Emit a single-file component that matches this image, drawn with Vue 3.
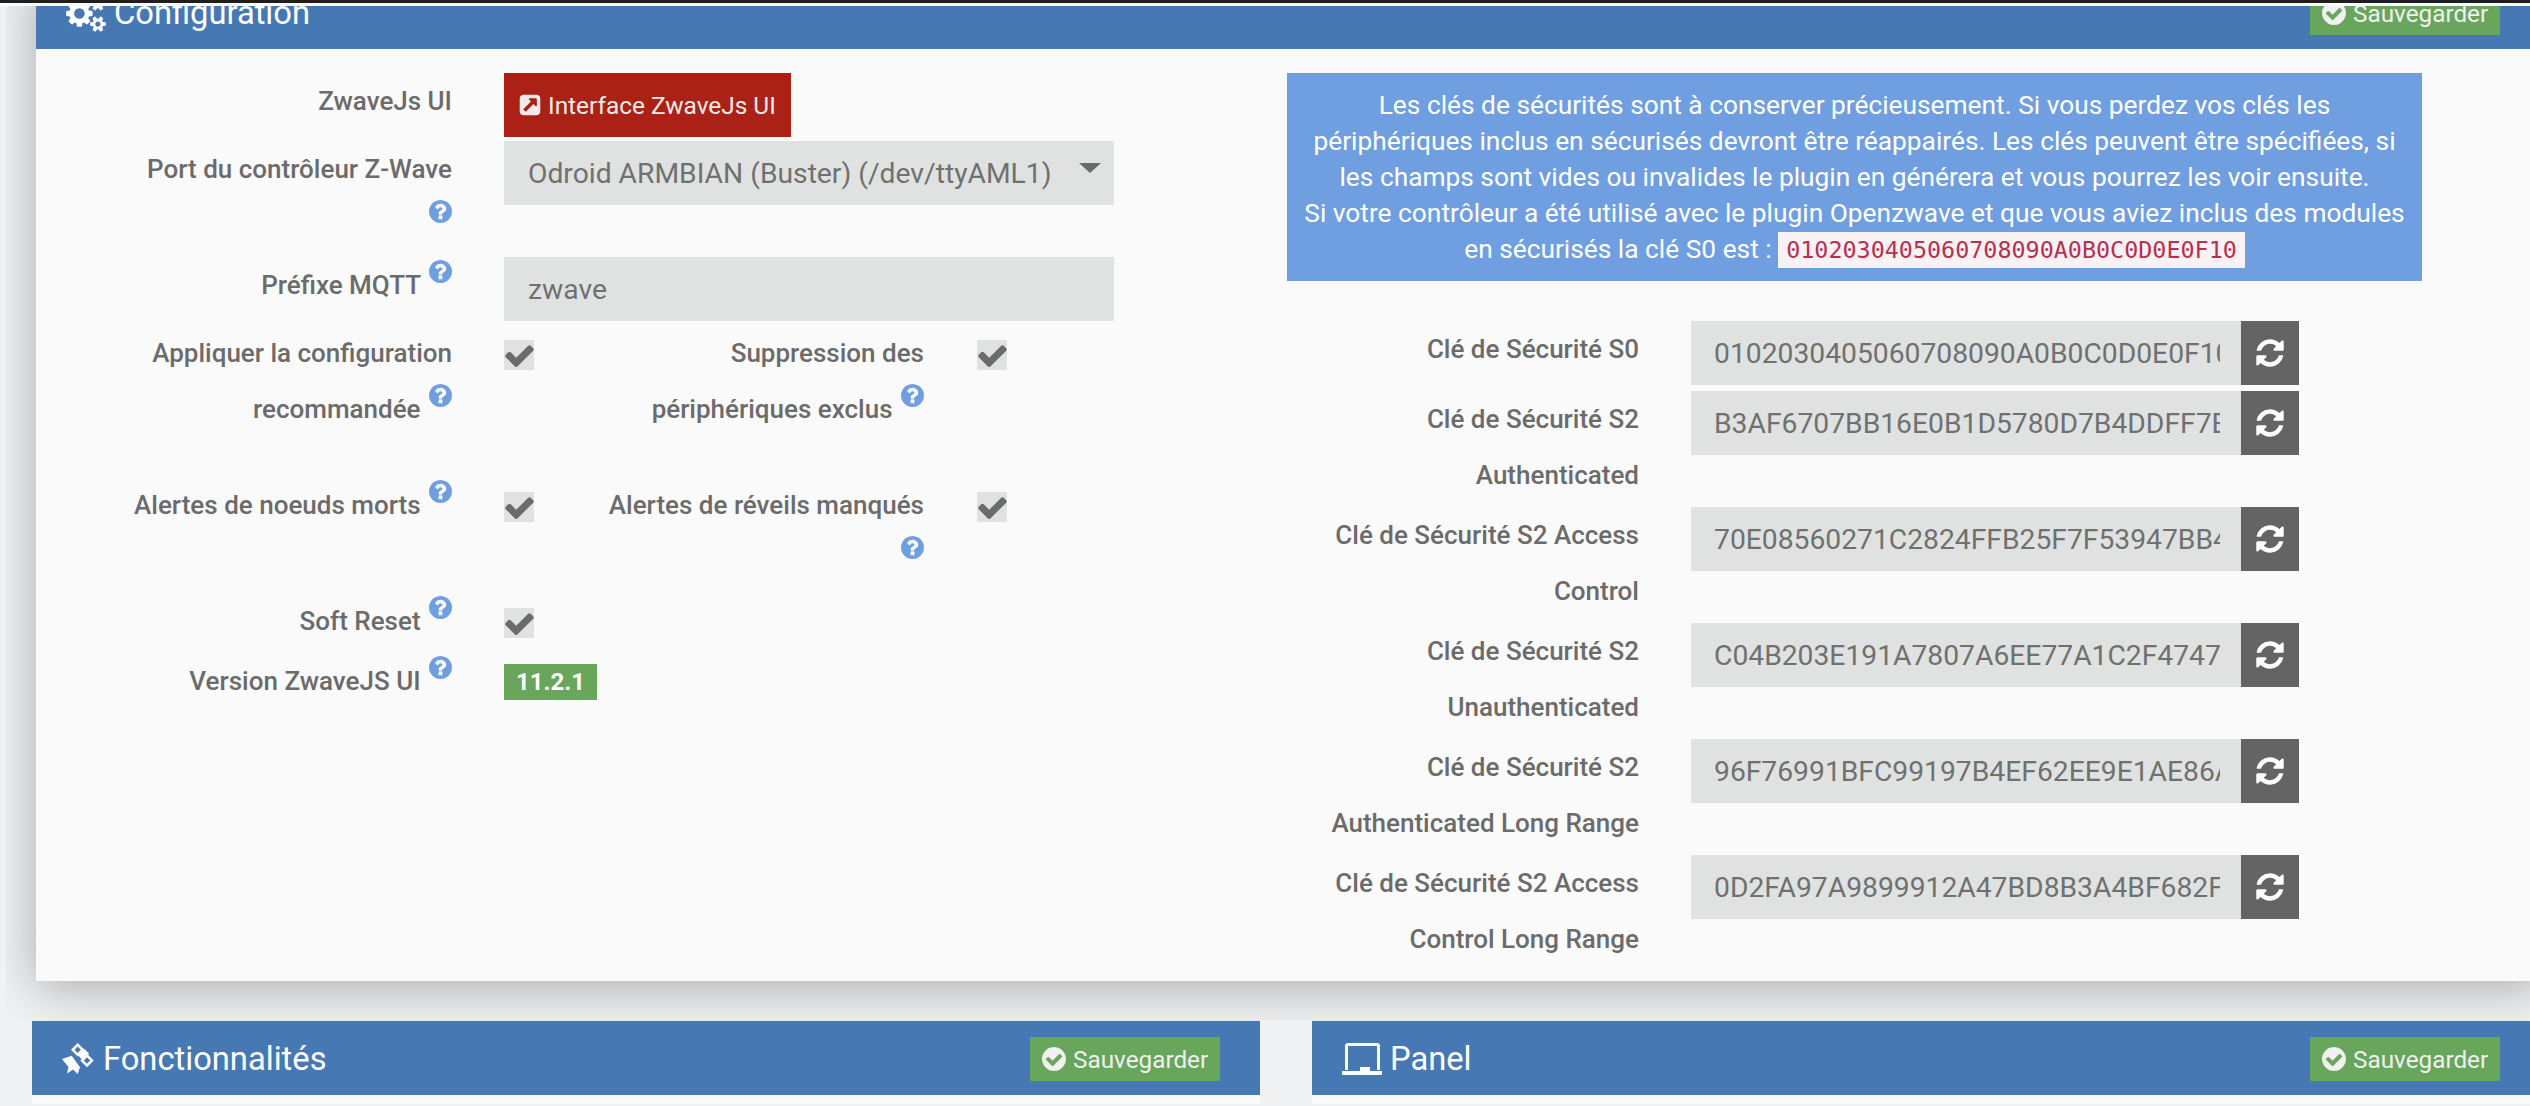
<script setup>
import { ref } from 'vue'

const CHECK = 'M1671 566q0 40-28 68l-724 724-136 136q-28 28-68 28t-68-28l-136-136-362-362q-28-28-28-68t28-68l136-136q28-28 68-28t68 28l294 295 656-657q28-28 68-28t68 28l136 136q28 28 28 68z'
const HELP = 'M1024 1376v-192q0-14-9-23t-23-9h-192q-14 0-23 9t-9 23v192q0 14 9 23t23 9h192q14 0 23-9t9-23zm256-672q0-88-55.5-163t-138.5-116-170-41q-243 0-371 213-15 24 8 42l132 100q7 6 19 6 16 0 25-12 53-68 86-92 34-24 86-24 48 0 85.5 26t37.5 59q0 38-20 61t-68 45q-63 28-115.5 86.5t-52.5 125.5v36q0 14 9 23t23 9h192q14 0 23-9t9-23q0-19 21.5-49.5t54.5-49.5q32-18 49-28.5t46-35 44.5-48 28-60.5 12.5-81zm384 192q0 209-103 385.5t-279.5 279.5-385.5 103-385.5-103-279.5-279.5-103-385.5 103-385.5 279.5-279.5 385.5-103 385.5 103 279.5 279.5 103 385.5z'
const SAVE = 'M1412 734q0-28-18-46l-91-90q-19-19-45-19t-45 19l-408 407-226-226q-19-19-45-19t-45 19l-91 90q-18 18-18 46 0 27 18 45l362 362q19 19 45 19 27 0 46-19l543-543q18-18 18-45zm252 162q0 209-103 385.5t-279.5 279.5-385.5 103-385.5-103-279.5-279.5-103-385.5 103-385.5 279.5-279.5 385.5-103 385.5 103 279.5 279.5 103 385.5z'
const REFRESH = 'M1639 1056q0 5-1 7-64 268-268 434.5t-478 166.5q-146 0-282.5-55t-243.5-157l-129 129q-19 19-45 19t-45-19-19-45v-448q0-26 19-45t45-19h448q26 0 45 19t19 45-19 45l-137 137q71 66 161 102t187 36q134 0 250-65t186-179q11-17 53-117 8-23 30-23h192q13 0 22.5 9.5t9.5 22.5zm25-800v448q0 26-19 45t-45 19h-448q-26 0-45-19t-19-45 19-45l138-138q-148-137-349-137-134 0-250 65t-186 179q-11 17-53 117-8 23-30 23h-199q-13 0-22.5-9.5t-9.5-22.5v-7q65-268 270-434.5t480-166.5q146 0 284 55.5t245 156.5l130-129q19-19 45-19t45 19 19 45z'
const LINK = 'M1408 928v-480q0-26-19-45t-45-19h-480q-42 0-59 39-17 41 14 70l144 144-534 534q-19 19-19 45t19 45l102 102q19 19 45 19t45-19l534-534 144 144q18 19 45 19 12 0 25-5 39-17 39-59zm256-512v960q0 119-84.5 203.5t-203.5 84.5h-960q-119 0-203.5-84.5t-84.5-203.5v-960q0-119 84.5-203.5t203.5-84.5h960q119 0 203.5 84.5t84.5 203.5z'
const COGS = 'M896 896q0-106-75-181t-181-75-181 75-75 181 75 181 181 75 181-75 75-181zm768 512q0-52-38-90t-90-38-90 38-38 90q0 53 37.5 90.5t90.5 37.5 90.5-37.5 37.5-90.5zm0-1024q0-52-38-90t-90-38-90 38-38 90q0 53 37.5 90.5t90.5 37.5 90.5-37.5 37.5-90.5zm-384 421v185q0 10-7 19.5t-16 10.5l-155 24q-11 35-32 76 34 48 90 115 7 11 7 20 0 12-7 19-23 30-82.5 89.5t-78.5 59.5q-11 0-21-7l-115-90q-37 19-77 31-11 108-23 155-7 24-30 24h-186q-11 0-20-7.5t-10-17.5l-23-153q-34-10-75-31l-118 89q-7 7-20 7-11 0-21-8-144-133-144-160 0-9 7-19 10-14 41-53t47-61q-23-44-35-82l-152-24q-10-1-17-9.5t-7-19.5v-185q0-10 7-19.5t16-10.5l155-24q11-35 32-76-34-48-90-115-7-11-7-20 0-12 7-20 22-30 82-89t79-59q11 0 21 7l115 90q34-18 77-32 11-108 23-154 7-24 30-24h186q11 0 20 7.5t10 17.5l23 153q34 10 75 31l118-89q8-7 20-7 11 0 21 8 144 133 144 160 0 8-7 19-12 16-42 54t-45 60q23 48 34 82l152 23q10 2 17 10.5t7 19.5zm640 533v140q0 16-149 31-12 27-30 52 51 113 51 138 0 4-4 7-122 71-124 71-8 0-46-47t-52-68q-20 2-30 2t-30-2q-14 21-52 68t-46 47q-2 0-124-71-4-3-4-7 0-25 51-138-18-25-30-52-149-15-149-31v-140q0-16 149-31 13-29 30-52-51-113-51-138 0-4 4-7 4-2 35-20t59-34 30-16q8 0 46 46.5t52 67.5q20-2 30-2t30 2q51-71 92-112l6-2q4 0 124 70 4 3 4 7 0 25-51 138 17 23 30 52 149 15 149 31zm0-1024v140q0 16-149 31-12 27-30 52 51 113 51 138 0 4-4 7-122 71-124 71-8 0-46-47t-52-68q-20 2-30 2t-30-2q-14 21-52 68t-46 47q-2 0-124-71-4-3-4-7 0-25 51-138-18-25-30-52-149-15-149-31v-140q0-16 149-31 13-29 30-52-51-113-51-138 0-4 4-7 4-2 35-20t59-34 30-16q8 0 46 46.5t52 67.5q20-2 30-2t30 2q51-71 92-112l6-2q4 0 124 70 4 3 4 7 0 25-51 138 17 23 30 52 149 15 149 31z'

const prefix = ref('zwave')

const keys = ref([
  { label: 'Clé de Sécurité S0', value: '0102030405060708090A0B0C0D0E0F10' },
  { label: 'Clé de Sécurité S2 Authenticated', value: 'B3AF6707BB16E0B1D5780D7B4DDFF7B4' },
  { label: 'Clé de Sécurité S2 Access Control', value: '70E08560271C2824FFB25F7F53947BB4' },
  { label: 'Clé de Sécurité S2 Unauthenticated', value: 'C04B203E191A7807A6EE77A1C2F47470' },
  { label: 'Clé de Sécurité S2 Authenticated Long Range', value: '96F76991BFC99197B4EF62EE9E1AE86A' },
  { label: 'Clé de Sécurité S2 Access Control Long Range', value: '0D2FA97A9899912A47BD8B3A4BF682F1' }
])
</script>

<template>
  <div class="page">
    <div class="topbar"></div>
    <div class="scroll">
      <div class="card-clip">
        <section class="card">
          <header class="panel-head">
            <h3 class="title">
              <svg class="ic-cogs" viewBox="0 0 1920 1792"><path :d="COGS" /></svg>
              Configuration
            </h3>
            <button class="save">
              <svg class="ic-save" viewBox="0 0 1792 1792"><path :d="SAVE" /></svg>
              Sauvegarder
            </button>
          </header>

          <div class="card-body">
            <div class="col-left">
              <div class="row">
                <div class="label">ZwaveJs UI</div>
                <a class="ext-btn">
                  <svg class="ic-link" viewBox="0 0 1792 1792"><path :d="LINK" /></svg>
                  Interface ZwaveJs UI
                </a>
              </div>

              <div class="row">
                <div class="label">Port du contrôleur Z-Wave <svg class="help" viewBox="128 128 1536 1536"><path :d="HELP" /></svg></div>
                <div class="select-wrap">
                  <select class="control select">
                    <option>Odroid ARMBIAN (Buster) (/dev/ttyAML1)</option>
                  </select>
                </div>
              </div>

              <div class="row">
                <div class="label">Préfixe MQTT <svg class="help" viewBox="128 128 1536 1536"><path :d="HELP" /></svg></div>
                <input class="control wide" v-model="prefix" />
              </div>

              <div class="row row-spaced">
                <div class="label">Appliquer la configuration recommandée <svg class="help" viewBox="128 128 1536 1536"><path :d="HELP" /></svg></div>
                <span class="check"><svg viewBox="0 0 1792 1792"><path :d="CHECK" /></svg></span>
                <div class="label label-2">Suppression des périphériques exclus <svg class="help" viewBox="128 128 1536 1536"><path :d="HELP" /></svg></div>
                <span class="check"><svg viewBox="0 0 1792 1792"><path :d="CHECK" /></svg></span>
              </div>

              <div class="row">
                <div class="label">Alertes de noeuds morts <svg class="help" viewBox="128 128 1536 1536"><path :d="HELP" /></svg></div>
                <span class="check"><svg viewBox="0 0 1792 1792"><path :d="CHECK" /></svg></span>
                <div class="label label-2">Alertes de réveils manqués <svg class="help" viewBox="128 128 1536 1536"><path :d="HELP" /></svg></div>
                <span class="check"><svg viewBox="0 0 1792 1792"><path :d="CHECK" /></svg></span>
              </div>

              <div class="row">
                <div class="label">Soft Reset <svg class="help" viewBox="128 128 1536 1536"><path :d="HELP" /></svg></div>
                <span class="check"><svg viewBox="0 0 1792 1792"><path :d="CHECK" /></svg></span>
              </div>

              <div class="row">
                <div class="label">Version ZwaveJS UI <svg class="help" viewBox="128 128 1536 1536"><path :d="HELP" /></svg></div>
                <span class="badge">11.2.1</span>
              </div>
            </div>

            <div class="col-right">
              <div class="alert">
                Les clés de sécurités sont à conserver précieusement. Si vous perdez vos clés les périphériques inclus en sécurisés devront être réappairés. Les clés peuvent être spécifiées, si les champs sont vides ou invalides le plugin en générera et vous pourrez les voir ensuite.<br />
                Si votre contrôleur a été utilisé avec le plugin Openzwave et que vous aviez inclus des modules en sécurisés la clé S0 est : <code>0102030405060708090A0B0C0D0E0F10</code>
              </div>

              <div class="keys">
                <div v-for="k in keys" :key="k.label" class="row key-row">
                  <div class="label">{{ k.label }}</div>
                  <input class="control key" v-model="k.value" />
                  <button class="regen">
                    <svg viewBox="0 0 1792 1792"><path :d="REFRESH" /></svg>
                  </button>
                </div>
              </div>
            </div>
          </div>
        </section>
      </div>

      <div class="bottom">
        <section class="panel">
          <header class="panel-head">
            <h3 class="title">
              <svg class="ic-sat" viewBox="0 0 32 32">
                <g fill="none" stroke="#fff" stroke-width="2.5">
                  <rect x="12.2" y="3.2" width="7" height="7" transform="rotate(45 15.7 6.7)" />
                  <rect x="21.5" y="14" width="7" height="7" transform="rotate(45 25 17.500)" />
                </g>
                <rect x="17" y="8" width="9" height="7" fill="#fff" transform="rotate(-45 21.500 11.500)" />
                <path fill="#fff" d="M0 16 9.700 12.700 18 24.300 15.700 31 11 26.500 5 30.500 6.500 24z" />
              </svg>
              Fonctionnalités
            </h3>
            <button class="save">
              <svg class="ic-save" viewBox="0 0 1792 1792"><path :d="SAVE" /></svg>
              Sauvegarder
            </button>
          </header>
          <div class="panel-rest"></div>
        </section>

        <section class="panel">
          <header class="panel-head">
            <h3 class="title">
              <svg class="ic-laptop" viewBox="0 0 40 32">
                <path fill="#fff" d="M6 0h29a3 3 0 0 1 3 3v24h-3V3H6v24H3V3a3 3 0 0 1 3-3zM18 24h10v4h12v3a1 1 0 0 1-1 1H1a1 1 0 0 1-1-1v-3h18z" />
              </svg>
              Panel
            </h3>
            <button class="save">
              <svg class="ic-save" viewBox="0 0 1792 1792"><path :d="SAVE" /></svg>
              Sauvegarder
            </button>
          </header>
          <div class="panel-rest"></div>
        </section>
      </div>
    </div>
  </div>
</template>

<style>
html,
body {
  margin: 0;
  background: #eff1f3;
}
</style>

<style scoped>
.page {
  position: relative;
  height: 1106px;
  overflow: hidden;
  background: #eff1f3;
  font-family: Roboto, "Liberation Sans", sans-serif;
  font-size: 26px;
  color: #6b6b6b;
}

/* barre de navigation fixe, par dessus le contenu scrollé */
.topbar {
  position: absolute;
  top: 0;
  left: 0;
  right: 0;
  height: 3px;
  background: #1e1e1e;
  border-bottom: 3px solid #f8f9fa;
  z-index: 5;
}

.scroll {
  margin-top: -25px;
}

/* l'ombre de la carte est coupée à gauche par son conteneur */
.card-clip {
  margin-left: 6px;
  padding-bottom: 40px;
  overflow: hidden;
}

.card {
  margin-left: 30px;
  width: 2510px;
  background: #fafafa;
  box-shadow: 0 6px 48px rgba(0, 0, 0, 0.3);
}

.panel-head {
  display: flex;
  justify-content: space-between;
  align-items: center;
  height: 74px;
  padding: 0 40px 0 30px;
  box-sizing: border-box;
  background: #4679b3;
}

.card .panel-head {
  padding-right: 46px;
}

.title {
  display: flex;
  align-items: center;
  margin: 0;
  font-size: 32.7px;
  font-weight: 400;
  color: #fff;
  line-height: 74px;
  padding-top: 2px;
}

.ic-cogs {
  width: 40px;
  height: 37px;
  margin-right: 8px;
  fill: #fff;
}

.ic-sat {
  width: 32px;
  height: 32px;
  margin-right: 9px;
}

.ic-laptop {
  width: 40px;
  height: 32px;
  margin-right: 8px;
}

.save {
  display: flex;
  align-items: center;
  width: 190px;
  height: 44px;
  margin-top: 2px;
  padding: 0 0 0 10px;
  box-sizing: border-box;
  border: 0;
  background: #68a65c;
  color: #f0f0f0;
  font: 400 24.3px Roboto, sans-serif;
}

.ic-save {
  width: 28px;
  height: 28px;
  margin-right: 5px;
  fill: #f0f0f0;
}

.card-body {
  display: flex;
  padding: 24px 0 10px;
}

.col-left {
  width: 1251px;
}

.col-right {
  width: 1135px;
}

.row {
  display: flex;
  align-items: flex-start;
  margin-bottom: 4px;
}

.row-spaced {
  margin-bottom: 40px;
}

.label {
  flex: none;
  width: 325px;
  margin: 0 52px 0 91px;
  text-align: right;
  line-height: 56px;
  font-weight: 500;
}

.label-2 {
  margin: 0 53px 0 65px;
}

.help {
  width: 23px;
  height: 23px;
  margin-left: 2px;
  vertical-align: 11px;
  fill: #6f9fe0;
}

.ext-btn {
  display: flex;
  align-items: center;
  width: 287px;
  height: 64px;
  padding-left: 14px;
  box-sizing: border-box;
  background: #ac2115;
  color: #f3ebe9;
  font-size: 24.4px;
}

.ic-link {
  width: 24px;
  height: 24px;
  margin-right: 6px;
  fill: #f3ebe9;
}

.control {
  height: 64px;
  padding: 0 24px;
  box-sizing: border-box;
  border: 0;
  border-radius: 0;
  outline: 0;
  background: #e0e2e1;
  color: #6f7170;
  font: 400 28.25px Roboto, sans-serif;
}

.wide {
  width: 610px;
}

.select-wrap {
  position: relative;
  width: 610px;
}

.select-wrap::after {
  content: "";
  position: absolute;
  top: 22px;
  right: 13px;
  border-style: solid;
  border-width: 10px 11px 0;
  border-color: #6b6b6b transparent transparent;
}

.select {
  display: block;
  width: 100%;
  appearance: none;
}

.check {
  display: flex;
  flex: none;
  align-items: center;
  justify-content: center;
  width: 30px;
  height: 30px;
  margin-top: 15px;
  background: #e0e2e1;
}

.check svg {
  flex: none;
  width: 33px;
  height: 33px;
  fill: #6b6b6b;
}

.badge {
  margin-top: 11px;
  padding: 0 12px;
  height: 36px;
  line-height: 36px;
  background: #68a65c;
  color: #fff;
  font-size: 24px;
  font-weight: 700;
}

.alert {
  padding: 14px 12px;
  background: #6f9fe0;
  color: #fff;
  font-size: 26.3px;
  font-weight: 400;
  line-height: 36px;
  text-align: center;
}

.alert code {
  padding: 4px 8px;
  background: #f9f2f4;
  color: #b8304f;
  font: 400 23.4px "DejaVu Sans Mono", monospace;
}

.keys {
  margin-top: 40px;
}

.key-row {
  margin-left: -64px;
  margin-bottom: 4px;
}

.key-row:first-child {
  margin-bottom: 6px;
}

.key {
  width: 550px;
  padding: 0 21px 0 23px;
}

.regen {
  display: flex;
  align-items: center;
  justify-content: center;
  width: 58px;
  height: 64px;
  padding: 0;
  border: 0;
  background: #646464;
}

.regen svg {
  flex: none;
  width: 32px;
  height: 32px;
  fill: #fff;
}

.bottom {
  display: grid;
  grid-template-columns: 1228px 1228px;
  column-gap: 52px;
  margin-left: 32px;
}

.panel-rest {
  height: 9px;
  background: #fafafa;
}
</style>
